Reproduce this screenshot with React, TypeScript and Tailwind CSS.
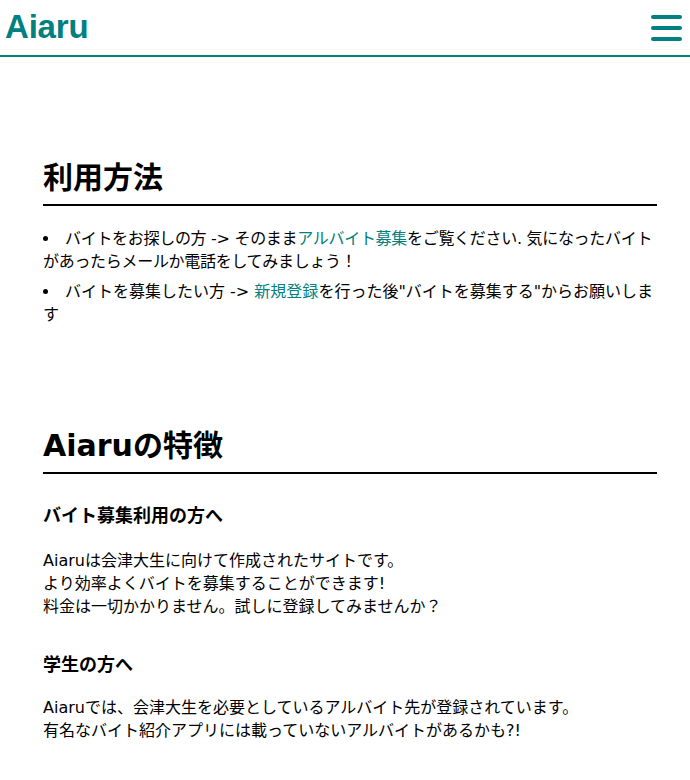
import React from 'react';

const font = { fontFamily: '"DejaVu Sans", "Noto Sans CJK JP", sans-serif' };

const Header = () => (
  <header className="flex items-center justify-between h-[57px] border-b-2 border-[#008080] pl-[5px] pr-[8px]">
    <h1
      style={{ fontFamily: '"Liberation Sans", Arial, sans-serif' }}
      className="text-[33px] leading-none text-[#008080] font-bold tracking-[-0.2px] mt-[-2px]"
    >
      Aiaru
    </h1>
    <button className="flex flex-col gap-[7px] w-[31px]" aria-label="menu">
      <span className="block h-[4px] rounded-full bg-[#008080]" />
      <span className="block h-[4px] rounded-full bg-[#008080]" />
      <span className="block h-[4px] rounded-full bg-[#008080]" />
    </button>
  </header>
);

const SectionTitle = ({ children }: { children: React.ReactNode }) => (
  <h2 className="text-[30px] font-bold leading-[45px] border-b-2 border-black pb-[4px]">{children}</h2>
);

const App = () => {
  return (
    <div style={font} className="bg-white text-black min-h-[780px]">
      <Header />
      <main className="ml-[43px] w-[614px]">
        <section className="pt-[98px]">
          <SectionTitle>利用方法</SectionTitle>
          <ul className="list-disc list-inside mt-[21px] text-[16px] leading-[23px] space-y-[7px]">
            <li className="tracking-[-0.3px]">
              {' '}バイトをお探しの方 -&gt; そのまま<a className="text-[#008080]">アルバイト募集</a>をご覧ください. 気になったバイトがあったらメールか電話をしてみましょう！
            </li>
            <li>
              {' '}バイトを募集したい方 -&gt; <a className="text-[#008080]">新規登録</a>を行った後"バイトを募集する"からお願いします
            </li>
          </ul>
        </section>
        <section className="pt-[97px]">
          <SectionTitle>Aiaruの特徴</SectionTitle>
          <h3 className="text-[18px] font-bold mt-[28px] leading-[27px]">バイト募集利用の方へ</h3>
          <p className="mt-[20px] text-[16px] leading-[23px]">
            Aiaruは会津大生に向けて作成されたサイトです。<br />
            より効率よくバイトを募集することができます!<br />
            料金は一切かかりません。試しに登録してみませんか？
          </p>
          <h3 className="text-[18px] font-bold mt-[33px] leading-[27px]">学生の方へ</h3>
          <p className="mt-[18px] text-[16px] leading-[23px]">
            Aiaruでは、会津大生を必要としているアルバイト先が登録されています。<br />
            有名なバイト紹介アプリには載っていないアルバイトがあるかも?!
          </p>
        </section>
      </main>
    </div>
  );
};

export default App;
